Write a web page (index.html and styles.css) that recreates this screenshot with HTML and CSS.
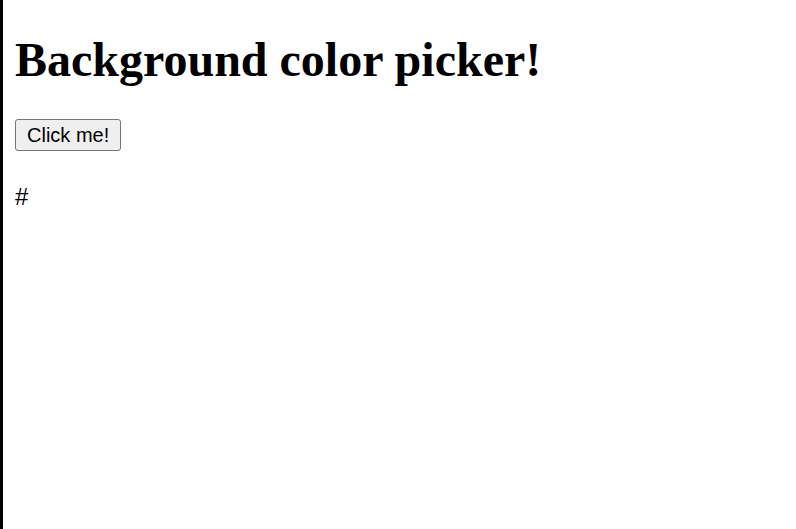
FILE: index.html
```html
<!DOCTYPE html>
<html>
<head>
<meta charset="utf-8">
<link rel="stylesheet" href="styles.css">
</head>
<body>
<h1 class="title">Background color picker!</h1>
<div class="row"><button class="btn">Click me!</button></div>
<p class="hex">#</p>
</body>
</html>
```
FILE: styles.css
```css
html {
  height: 100%;
  box-sizing: border-box;
  border-left: 3px solid #000;
  background: #fff;
}
body {
  margin: 0 12px;
  font-family: "Liberation Serif", serif;
  font-size: 24px;
  color: #000;
}
.title {
  font-family: "Liberation Serif", serif;
  font-size: 48px;
  font-weight: bold;
  margin: 32px 0;
}
.row {
  line-height: 0;
}
.btn {
  font-family: "Liberation Sans", sans-serif;
  font-size: 20px;
  line-height: 24px;
  height: 32px;
  box-sizing: border-box;
  padding: 3px 11px;
  border: 1px solid #767676;
  border-radius: 3px;
  background: #efefef;
  color: #000;
  margin: 0;
}
.hex {
  font-family: "Liberation Sans", sans-serif;
  font-size: 24px;
  margin: 32px 0 24px;
}
```
